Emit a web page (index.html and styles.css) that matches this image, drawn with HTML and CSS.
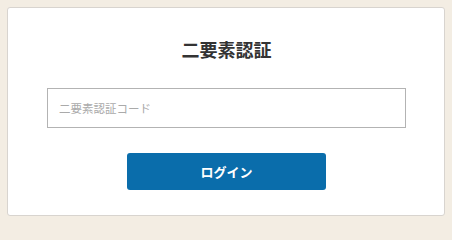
FILE: index.html
```html
<!DOCTYPE html>
<html lang="ja">
<head>
<meta charset="utf-8">
<link rel="stylesheet" href="styles.css">
</head>
<body>
<div class="page">
  <form class="card">
    <h1 class="title">二要素認証</h1>
    <input class="code-input" type="text" placeholder="二要素認証コード">
    <button class="login-btn" type="button">ログイン</button>
  </form>
</div>
</body>
</html>
```
FILE: styles.css
```css
html, body {
  margin: 0;
  padding: 0;
  height: 224px;
  overflow: hidden;
  background: #f3ede3;
  font-family: "Noto Sans CJK JP", "Noto Sans", sans-serif;
}
.page {
  box-sizing: border-box;
  height: 224px;
  padding: 7px;
}
.card {
  box-sizing: border-box;
  width: 438px;
  height: 209px;
  margin: 0;
  background: #fff;
  border: 1px solid #d8d4cf;
  border-radius: 3px;
  padding: 29px 38px 25px 39px;
  display: flex;
  flex-direction: column;
  align-items: center;
}
.title {
  margin: 0;
  font-size: 18px;
  line-height: 24px;
  font-weight: 700;
  color: #333;
}
.code-input {
  box-sizing: border-box;
  margin-top: 27px;
  width: 100%;
  height: 40px;
  border: 1px solid #b3b3b3;
  border-radius: 0;
  padding: 0 11px;
  font-family: inherit;
  font-size: 11.5px;
  color: #333;
  outline: none;
}
.code-input::placeholder {
  color: #aaa;
}
.login-btn {
  margin-top: 25px;
  width: 199px;
  height: 37px;
  border: none;
  border-radius: 3px;
  background: #0a6dab;
  color: #fff;
  font-family: inherit;
  font-size: 13px;
  font-weight: 700;
  padding: 0;
}
```
